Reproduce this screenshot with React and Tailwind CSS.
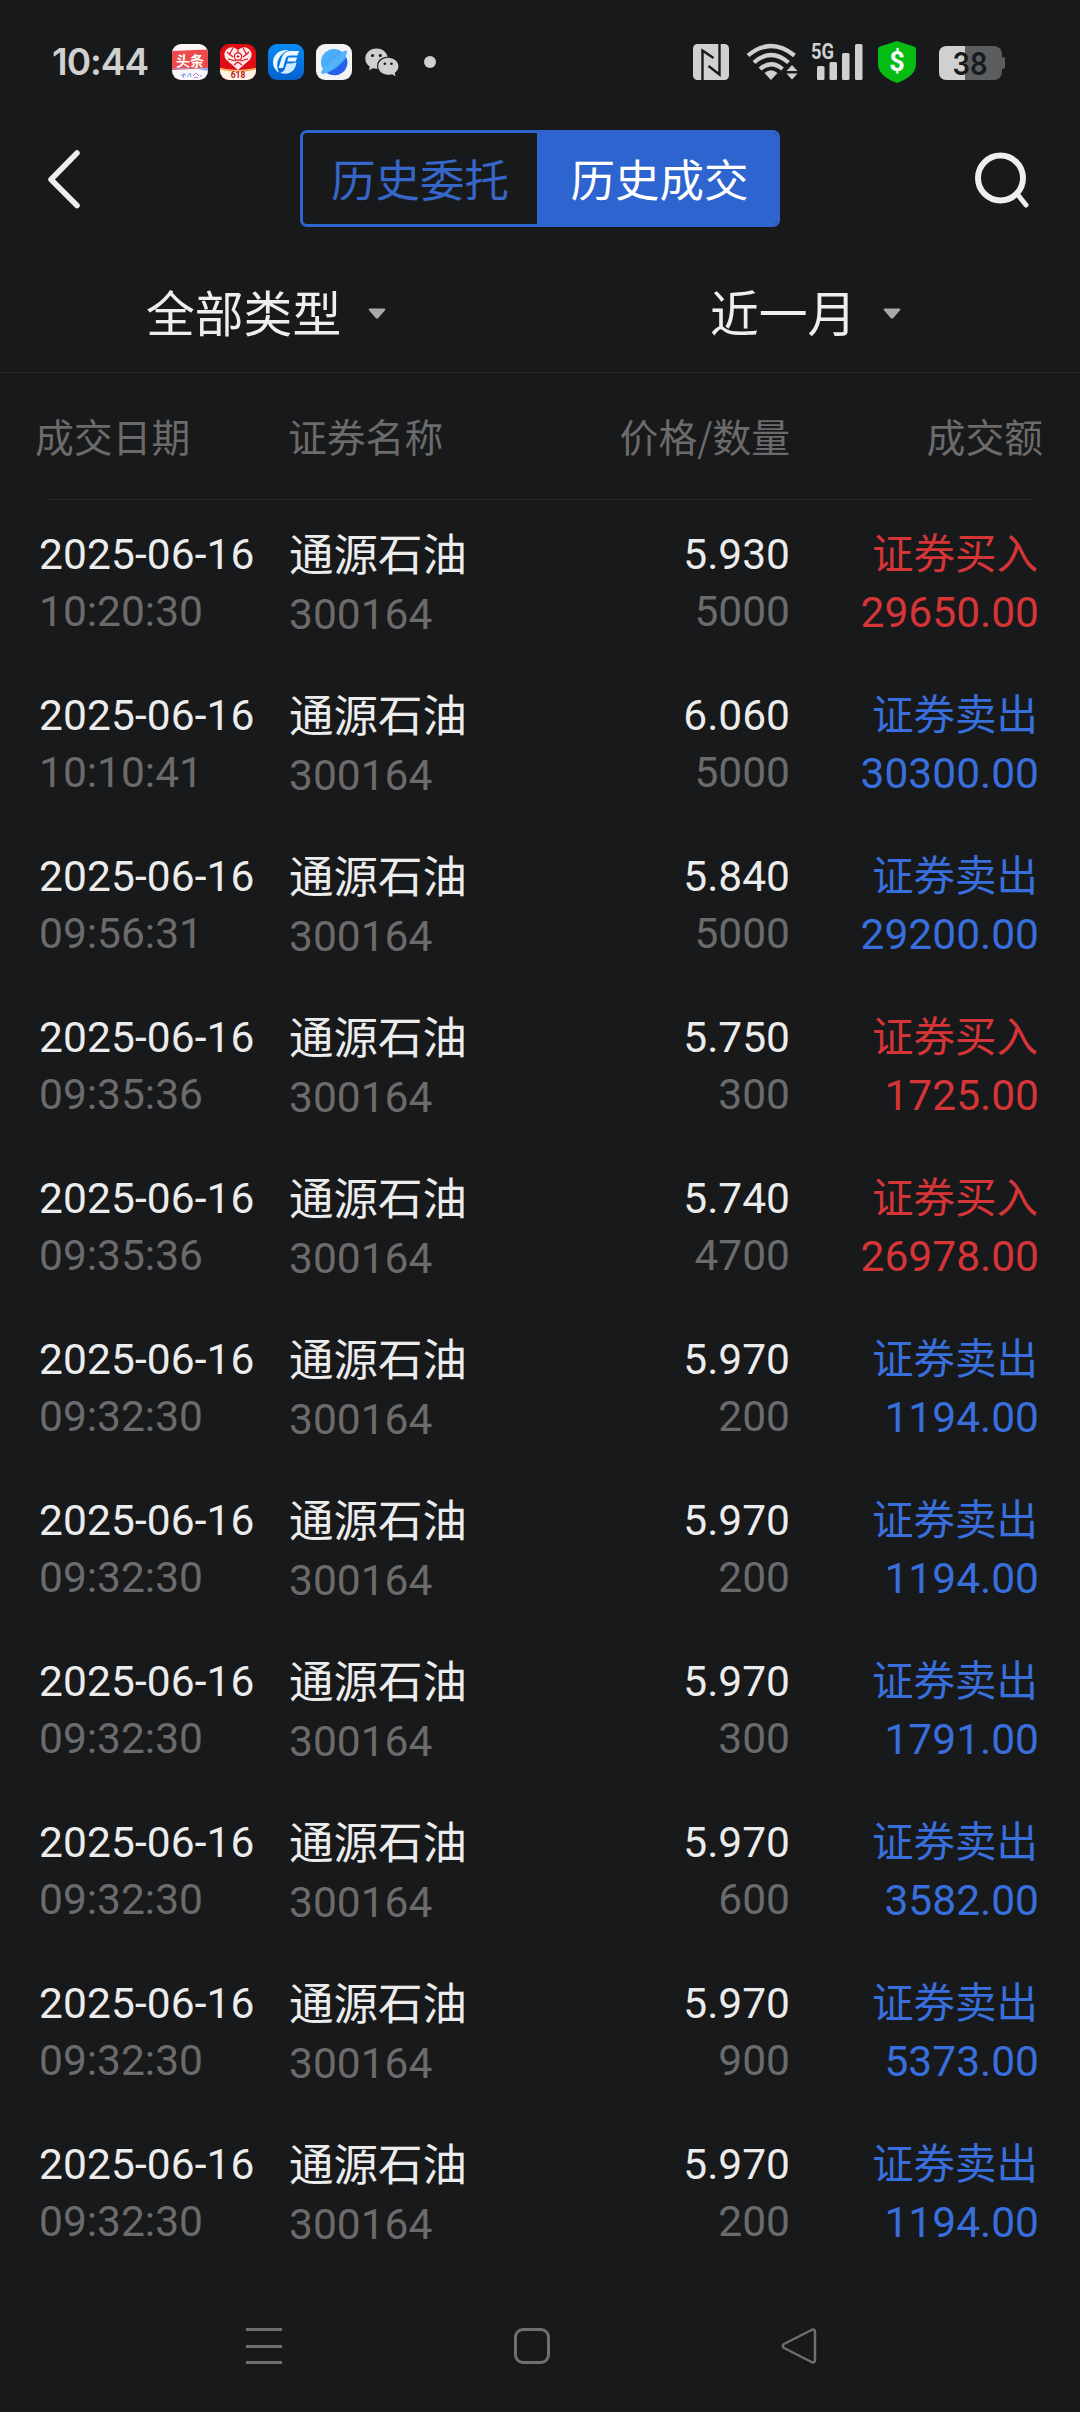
import React from 'react';

const trades = [
    { time: '10:20:30', price: '5.930', qty: '5000', side: 'buy', amount: '29650.00' },
    { time: '10:10:41', price: '6.060', qty: '5000', side: 'sell', amount: '30300.00' },
    { time: '09:56:31', price: '5.840', qty: '5000', side: 'sell', amount: '29200.00' },
    { time: '09:35:36', price: '5.750', qty: '300', side: 'buy', amount: '1725.00' },
    { time: '09:35:36', price: '5.740', qty: '4700', side: 'buy', amount: '26978.00' },
    { time: '09:32:30', price: '5.970', qty: '200', side: 'sell', amount: '1194.00' },
    { time: '09:32:30', price: '5.970', qty: '200', side: 'sell', amount: '1194.00' },
    { time: '09:32:30', price: '5.970', qty: '300', side: 'sell', amount: '1791.00' },
    { time: '09:32:30', price: '5.970', qty: '600', side: 'sell', amount: '3582.00' },
    { time: '09:32:30', price: '5.970', qty: '900', side: 'sell', amount: '5373.00' },
    { time: '09:32:30', price: '5.970', qty: '200', side: 'sell', amount: '1194.00' },
];

function AppIcons() {
    return (
        <div className="flex items-center gap-3">
            {/* Toutiao */}
            <svg className="size-9 rounded-[9px]" viewBox="0 0 36 36">
                <rect width="36" height="36" fill="#fbf6f8" />
                <path d="M0 7 L36 5.5 V24 L0 26 Z" fill="#ee4a4c" />
                <path d="M0 24.5 Q18 22 36 27 V24 L0 25 Z" fill="#8fa8ea" />
                <text x="18" y="21.5" fontSize="14" fontWeight="700" fill="#fff" textAnchor="middle" fontFamily="Noto Sans CJK SC, sans-serif">头条</text>
                <path d="M9 31.5 l5 -1 M12 29 l-1 5 M15 33 l3 -4 l1 4" stroke="#6aa5ee" strokeWidth="1" fill="none" />
                <path d="M21 32 l3 -3 l3 3 M22 33.5 h4 M28 32 h2" stroke="#b78be6" strokeWidth="1" fill="none" />
            </svg>
            {/* Pinduoduo */}
            <svg className="size-9 rounded-[9px]" viewBox="0 0 36 36">
                <rect width="36" height="36" fill="#e00d14" />
                <path d="M0 24 Q18 28 36 24 V36 H0 Z" fill="#fdf3e6" />
                <path d="M0 24 Q18 29 36 24 V25.5 Q18 30 0 25.5 Z" fill="#f6a13c" />
                <path d="M18 26 L6 15.5 Q2.5 10 6.5 5.5 Q12 1 18 6 Q24 1 29.5 5.5 Q33.5 10 30 15.5 Z" fill="#fbe9e9" />
                <path d="M7 8 l6 5 M13 4 l-4 7 M29 8 l-6 5 M23 4 l4 7 M8 15 l8 2 M28 15 l-8 2 M14 21 l4 -3 l4 3 M18 6 v3" stroke="#e00d14" strokeWidth="1.1" fill="none" />
                <circle cx="18" cy="12.5" r="3.6" fill="#fff" stroke="#e00d14" strokeWidth="1.2" />
                <path d="M16.5 12.5 h3 M18 11 v3" stroke="#e00d14" strokeWidth="1" />
                <text x="18" y="34" fontSize="8.5" fontWeight="700" fill="#c4161c" textAnchor="middle" fontFamily="Roboto, sans-serif">618</text>
            </svg>
            {/* GF Securities */}
            <svg className="size-9 rounded-[9px]" viewBox="0 0 36 36">
                <defs>
                    <linearGradient id="gf" x1="0" y1="0" x2="0" y2="1">
                        <stop offset="0" stopColor="#0a8cf5" />
                        <stop offset="1" stopColor="#0560cc" />
                    </linearGradient>
                </defs>
                <rect width="36" height="36" fill="url(#gf)" />
                <path d="M21 6 C11 5 5 11 5 18 C5 23 7.5 26.5 11 28.5 C6.5 19 11 9.5 21 6 Z" fill="#e8f6ff" />
                <path d="M31 7 H22 Q16 7.5 14 13 L10.5 24 H15 L17.5 15 Q18.5 11.5 22 11.5 H29.5 Z" fill="#e8f6ff" />
                <path d="M29 13.5 H20.5 L19.2 17.5 H27.8 Z" fill="#e8f6ff" />
                <path d="M23 19.5 H18.6 L17 24.5 Q16 27.5 12 29 Q21 31.5 26 25.5 Q28 22.5 28.5 18.5 Z" fill="#cfeaff" />
            </svg>
            {/* Browser */}
            <svg className="size-9 rounded-[9px]" viewBox="0 0 36 36">
                <defs>
                    <linearGradient id="planet" x1="0" y1="0" x2="1" y2="1">
                        <stop offset="0" stopColor="#4fb8ff" />
                        <stop offset="1" stopColor="#3f93f6" />
                    </linearGradient>
                </defs>
                <rect width="36" height="36" fill="#f3f3f5" />
                <circle cx="18" cy="18" r="13" fill="url(#planet)" />
                <path d="M30.5 13.5 A13 13 0 0 1 11 29 Q23 24 30.5 13.5 Z" fill="#2560ea" />
                <path d="M26.5 8 Q31 5 31 8.5 Q30 14 22 21 Q13 29 7 30 Q3.5 30 7 24.5 Z" fill="#53b4fb" />
            </svg>
        </div>
    );
}

function WechatIcon() {
    return (
        <svg className="ml-[13px] h-[29px] w-[34px]" viewBox="0 0 34 29">
            <path d="M11.5 0.5 C5 0.5 0.3 5 0.3 10.5 C0.3 14 2 16.8 4.8 18.7 L4 22.2 L8 20.3 C9.5 20.7 11 20.8 12.5 20.7 C10.5 13.5 16 8.5 22.7 8.7 C21.5 4 17 0.5 11.5 0.5 Z" fill="#d0d0d1" />
            <path d="M23 9.8 C17.5 9.8 13.2 13.5 13.2 18.3 C13.2 23 17.5 26.8 23 26.8 C24.5 26.8 25.8 26.5 27 26.2 L30.5 28.3 L29.8 24.8 C32 23.2 33.4 21 33.4 18.3 C33.4 13.5 28.8 9.8 23 9.8 Z" fill="#d0d0d1" />
            <circle cx="7.5" cy="7.5" r="1.6" fill="#18191b" />
            <circle cx="15.3" cy="7.5" r="1.6" fill="#18191b" />
            <circle cx="19.8" cy="15.7" r="1.3" fill="#18191b" />
            <circle cx="26.5" cy="15.7" r="1.3" fill="#18191b" />
        </svg>
    );
}

function StatusIcons() {
    return (
        <svg className="h-[44px] w-[314px]" viewBox="693 40 314 44" fill="#d0d0d1">
            {/* NFC */}
            <rect x="693" y="44" width="36" height="36" rx="4.5" />
            <path d="M702.5 80 V50.5 L713.5 58 M719.5 44 V74.5 L708.5 66" fill="none" stroke="#18191b" strokeWidth="2.4" />
            {/* Wi-Fi */}
            <g fill="none" stroke="#d0d0d1" strokeWidth="4.2">
                <path d="M748 55.5 Q771 36.5 794.5 55.5" />
                <path d="M754 62.5 Q771 47.5 788.5 62.5" />
                <path d="M760 69 Q771 59.5 782.5 69" />
            </g>
            <path d="M764.5 73 Q771 67.5 777.5 73 L771 80 Z" />
            <path d="M792 65 L797.5 71 H786.5 Z M792 79.5 L797.5 73.5 H786.5 Z" />
            {/* Signal */}
            <text x="811" y="59" fontSize="22" fontWeight="700" fontFamily="Roboto, sans-serif" textLength="23" lengthAdjust="spacingAndGlyphs">5G</text>
            <rect x="817" y="66" width="7.5" height="14" rx="1.5" />
            <rect x="829.5" y="62" width="7.5" height="18" rx="1.5" />
            <rect x="842" y="53" width="7.5" height="27" rx="1.5" />
            <rect x="855" y="44" width="7.5" height="36" rx="1.5" />
            {/* Payment shield */}
            <path d="M897 41 L914 46.5 Q916 47.3 916 49 V64 Q916 76 897 83 Q878 76 878 64 V49 Q878 47.3 880 46.5 Z" fill="#06bc12" />
            <text x="897" y="71" fontSize="27" fontWeight="700" fill="#fff" textAnchor="middle" fontFamily="Roboto, sans-serif">$</text>
            {/* Battery */}
            <rect x="939" y="46" width="63" height="34" rx="8" fill="#5c5d5f" />
            <rect x="1001" y="57" width="4" height="12" rx="2" fill="#5c5d5f" />
            <path d="M965 46 H947 Q939 46 939 54 V72 Q939 80 947 80 H965 Z" />
            <text x="952.5" y="74.5" fontSize="31" fontWeight="600" fill="#18191b" fontFamily="Inter, sans-serif" textLength="35" lengthAdjust="spacingAndGlyphs">38</text>
        </svg>
    );
}

function Caret() {
    return (
        <svg className="mt-[5px] ml-[27px] h-[12px] w-[18px]" viewBox="0 0 18 12">
            <path d="M1.5 0.5 H16.5 Q18 1 17 2.3 L10.3 10 Q9 11.5 7.7 10 L1 2.3 Q0 1 1.5 0.5 Z" fill="#a9a9a9" />
        </svg>
    );
}

function TradeRow({ trade }) {
    const isBuy = trade.side === 'buy';
    return (
        <div className="flex h-[161px] border-b border-[#1b1c1e] pt-[26px] pr-[41px] pl-[39px] font-[Roboto,'Noto_Sans_CJK_SC',sans-serif] text-[42.5px] leading-[58px] text-[#ececec]">
            <div className="w-[250px]">
                <div className="whitespace-nowrap tracking-[0.1px]">2025-06-16</div>
                <div className="-mt-px text-[#6b6b6b]">{trade.time}</div>
            </div>
            <div className="w-[200px]">
                <div className="pt-px text-[44.5px]">通源石油</div>
                <div className="pt-px text-[#6b6b6b]">300164</div>
            </div>
            <div className="flex-1 text-right">
                <div>{trade.price}</div>
                <div className="-mt-px text-[#6b6b6b]">{trade.qty}</div>
            </div>
            <div className={isBuy ? 'w-[249px] text-right text-[#d63538]' : 'w-[249px] text-right text-[#386fdc]'}>
                <div className="pr-px text-[41.5px]">{isBuy ? '证券买入' : '证券卖出'}</div>
                <div>{trade.amount}</div>
            </div>
        </div>
    );
}

function App() {
    return (
        <div className="flex h-[2412px] w-[1080px] flex-col overflow-hidden bg-[#18191b] font-['Noto_Sans_CJK_SC',sans-serif] text-[#eeeeee]">
            {/* Status bar */}
            <div className="flex h-[124px] items-center pl-[52px]">
                <div className="w-[120px] font-[Inter,sans-serif] text-[37px] font-semibold tracking-[-1px] text-[#d0d0d1]">10:44</div>
                <AppIcons />
                <WechatIcon />
                <div className="ml-[25px] size-3 rounded-full bg-[#d0d0d1]" />
                <div className="ml-auto pr-[73px]">
                    <StatusIcons />
                </div>
            </div>

            {/* Title bar */}
            <div className="flex h-[109px] items-center pl-[46px]">
                <svg className="h-[60px] w-[36px]" viewBox="0 0 36 60" fill="none" stroke="#eeeeee" strokeWidth="5.5" strokeLinecap="round" strokeLinejoin="round">
                    <path d="M31 4 L5 30.5 L31 56.5" />
                </svg>
                <div className="ml-[218px] flex h-[97px] w-[480px] overflow-hidden rounded-[7px] border-[3px] border-[#3064cd] text-[44.5px]">
                    <div className="flex w-[234px] items-center justify-center text-[#3566c8]">历史委托</div>
                    <div className="flex flex-1 items-center justify-center bg-[#2e64cf] pl-[5px] text-white">历史成交</div>
                </div>
                <svg className="ml-[193px] h-[62px] w-[58px]" viewBox="0 0 58 62" fill="none" stroke="#eeeeee" strokeLinecap="round">
                    <circle cx="27.5" cy="30" r="22.5" strokeWidth="6" />
                    <path d="M45 47 L53 57" strokeWidth="5" />
                </svg>
            </div>

            {/* Filters */}
            <div className="flex h-[140px] items-center border-b border-[#28292b] pt-[17px] text-[48.8px]">
                <div className="flex w-[540px] items-center pl-[146px]">
                    <span>全部类型</span>
                    <Caret />
                </div>
                <div className="flex w-[540px] items-center pl-[170px]">
                    <span>近一月</span>
                    <Caret />
                </div>
            </div>

            {/* Column titles */}
            <div className="flex h-[126px] items-center pr-[37px] pb-[2px] pl-[35px] text-[38.8px] text-[#6b6b6b]">
                <div className="w-[253px]">成交日期</div>
                <div className="w-[200px]">证券名称</div>
                <div className="flex-1 text-right">价格/数量</div>
                <div className="w-[253px] text-right">成交额</div>
            </div>
            <div className="mx-[46px] h-px shrink-0 bg-[#28292b]" />

            {trades.map((trade, i) => (
                <TradeRow key={i} trade={trade} />
            ))}

            {/* System navigation */}
            <div className="flex flex-1 items-center justify-between pt-[9px] pr-[263px] pl-[246px]">
                <div className="flex h-9 w-9 flex-col justify-between">
                    <div className="h-[3px] bg-[#6f6f71]" />
                    <div className="h-[3px] bg-[#6f6f71]" />
                    <div className="h-[3px] bg-[#6f6f71]" />
                </div>
                <div className="size-9 rounded-[9px] border-[3px] border-[#6f6f71]" />
                <svg className="h-[36px] w-[36px]" viewBox="0 0 36 36" fill="none" stroke="#6f6f71" strokeWidth="2.5" strokeLinejoin="round">
                    <path d="M30.5 2 Q34 0.5 34 4 V32 Q34 35.5 30.5 34 L3 20 Q0.5 18 3 16 Z" />
                </svg>
            </div>
        </div>
    );
}

export default App;
